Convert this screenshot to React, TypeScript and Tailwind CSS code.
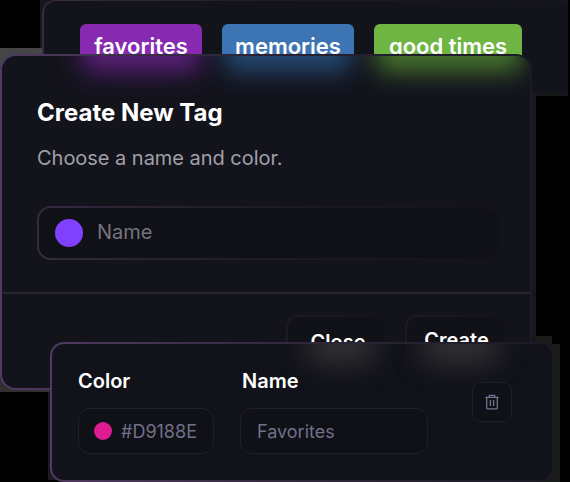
import React from "react";

function Tag({ label, className }: { label: string; className: string }) {
  return (
    <span className={`flex h-11 justify-center rounded-md pt-[7px] text-[22px] leading-[30px] font-semibold whitespace-nowrap ${className}`}>
      {label}
    </span>
  );
}

function TagsCard() {
  return (
    <section className="absolute top-0 left-10 h-24 w-[528px] bg-[#171819]">
      <div className="ml-[2px] h-[93px] w-[526px] rounded-[14px] rounded-b-none bg-linear-to-r from-[#3a2b45] via-[#1b1a25] to-[#14141d] pt-px pl-[2px]">
        <div className="flex h-full gap-5 rounded-tl-xl rounded-br-xl bg-[#13131c] pt-[23px] pl-9">
          <Tag label="favorites" className="w-[122px] bg-[#8729b1]" />
          <Tag label="memories" className="w-[132px] bg-[#3d74b3]" />
          <Tag label="good times" className="w-[148px] bg-[#6fb543]" />
        </div>
      </div>
    </section>
  );
}

function CreateCard() {
  return (
    <section className="absolute top-[54px] left-0 h-[336px] w-[532px] rounded-2xl bg-linear-to-r from-[#503a60] via-[#2a2333] to-[#1b1b26] p-[2px]">
      <div className="relative h-full overflow-hidden rounded-[14px] bg-[#13131c]">
        <div className="absolute -top-8 left-[80px] h-12 w-[118px] rounded-lg bg-[#5b1f79] blur-[12px]" />
        <div className="absolute -top-8 left-[222px] h-12 w-[128px] rounded-lg bg-[#244972] blur-[12px]" />
        <div className="absolute -top-8 left-[374px] h-12 w-[146px] rounded-lg bg-[#46732d] blur-[12px]" />
        <div className="relative h-[236px] px-[35px] pt-[41px]">
          <h2 className="text-2xl leading-8 font-bold text-white">Create New Tag</h2>
          <p className="mt-[14px] text-[20px] leading-[30px] tracking-[-0.03px] text-[#a0a0a9]">Choose a name and color.</p>
          <div className="mt-[33px] h-[54px] w-[462px] rounded-[14px] bg-linear-to-r from-[#36293f] via-[#1d1b26] to-[#12121a] p-[2px]">
            <div className="flex h-full items-center rounded-xl bg-[#101017] pl-4">
              <span className="size-[28px] rounded-full bg-[#8041ff]" />
              <span className="-mt-[2px] ml-[14px] text-[20px] leading-7 text-[#747481]">Name</span>
            </div>
          </div>
        </div>
        <div className="h-[2px] bg-[#282330]" />
        <div className="relative flex gap-[18px] pt-[21px] pl-[284px]">
          <GhostButton label="Close" />
          <GhostButton label="Create" raised />
        </div>
      </div>
    </section>
  );
}

function GhostButton({ label, raised = false }: { label: string; raised?: boolean }) {
  return (
    <div className="h-12 w-[101px] rounded-xl bg-linear-to-r from-[#1c1b25] to-[#13131c] p-[2px]">
      <div className={`h-full rounded-[10px] bg-[#111118] text-center text-[20px] leading-7 font-semibold text-white ${raised ? "pt-[9px] pl-[2px]" : "pt-[11px] pl-[3px]"}`}>
        {label}
      </div>
    </div>
  );
}

function TrashIcon() {
  return (
    <svg className="-mt-px" width="14" height="16" viewBox="0 0 14 16" fill="none" stroke="#73738d" strokeWidth="1.3" strokeLinejoin="round">
      <path d="M0.3 3.4h13.4M4.2 3.2V1.9q0-.5.5-.5h4.6q.5 0 .5.5v1.3M1.7 3.4v10.7q0 .7.7.7h9.2q.7 0 .7-.7V3.4M5.4 6v6M8.6 6v6" />
    </svg>
  );
}

function EditCard() {
  return (
    <section className="absolute top-[342px] left-[50px] h-[140px] w-[504px] rounded-[14px] bg-linear-to-r from-[#503a60] via-[#30283a] to-[#191923] p-[2px]">
      <div className="relative h-full overflow-hidden rounded-xl bg-[#12121a]">
        <div className="absolute -top-4 left-[253px] h-9 w-[72px] rounded-full bg-[#303034] blur-[13px]" />
        <div className="absolute -top-4 left-[368px] h-9 w-[80px] rounded-full bg-[#303034] blur-[13px]" />
        <div className="relative flex pt-6 pl-[26px]">
          <label className="w-[136px]">
            <span className="block text-[20px] leading-[26px] font-semibold text-white">Color</span>
            <span className="mt-[14px] flex h-[46px] items-center rounded-xl border border-[#20202a] bg-[#101017] pl-[15px]">
              <span className="size-[18px] rounded-full bg-[#df1b91]" />
              <span className="ml-[9px] pt-[2px] text-[18px] leading-6 text-[#71718b]">#D9188E</span>
            </span>
          </label>
          <label className="ml-[26px] w-[188px]">
            <span className="block pl-[2px] text-[20px] leading-[26px] font-semibold text-white">Name</span>
            <span className="mt-[14px] flex h-[46px] items-center rounded-xl border border-[#20202a] bg-[#101017] pt-[2px] pl-4 text-[18px] leading-6 text-[#71718b]">
              Favorites
            </span>
          </label>
          <button className="mt-[14px] ml-11 flex size-10 items-center justify-center rounded-[9px] border border-[#20202a] bg-[#101017]">
            <TrashIcon />
          </button>
        </div>
      </div>
    </section>
  );
}

export default function App() {
  return (
    <main className="relative h-[482px] w-[570px] overflow-hidden bg-black font-['Inter',sans-serif] text-white">
      <TagsCard />
      <div className="absolute top-12 left-0 h-5 w-[42px] bg-[#454545]" />
      <div className="absolute top-[96px] left-[520px] h-[246px] w-4 bg-[#171819]" />
      <div className="absolute top-[370px] left-0 h-[22px] w-[50px] bg-[#303030]" />
      <CreateCard />
      <div className="absolute top-[336px] left-[536px] h-5 w-4 bg-[#1b1b1c]" />
      <div className="absolute top-[344px] left-[540px] h-[138px] w-5 bg-[#191a1a]" />
      <div className="absolute top-[392px] left-12 h-[88px] w-5 bg-[#1c1a1e]" />
      <EditCard />
    </main>
  );
}
